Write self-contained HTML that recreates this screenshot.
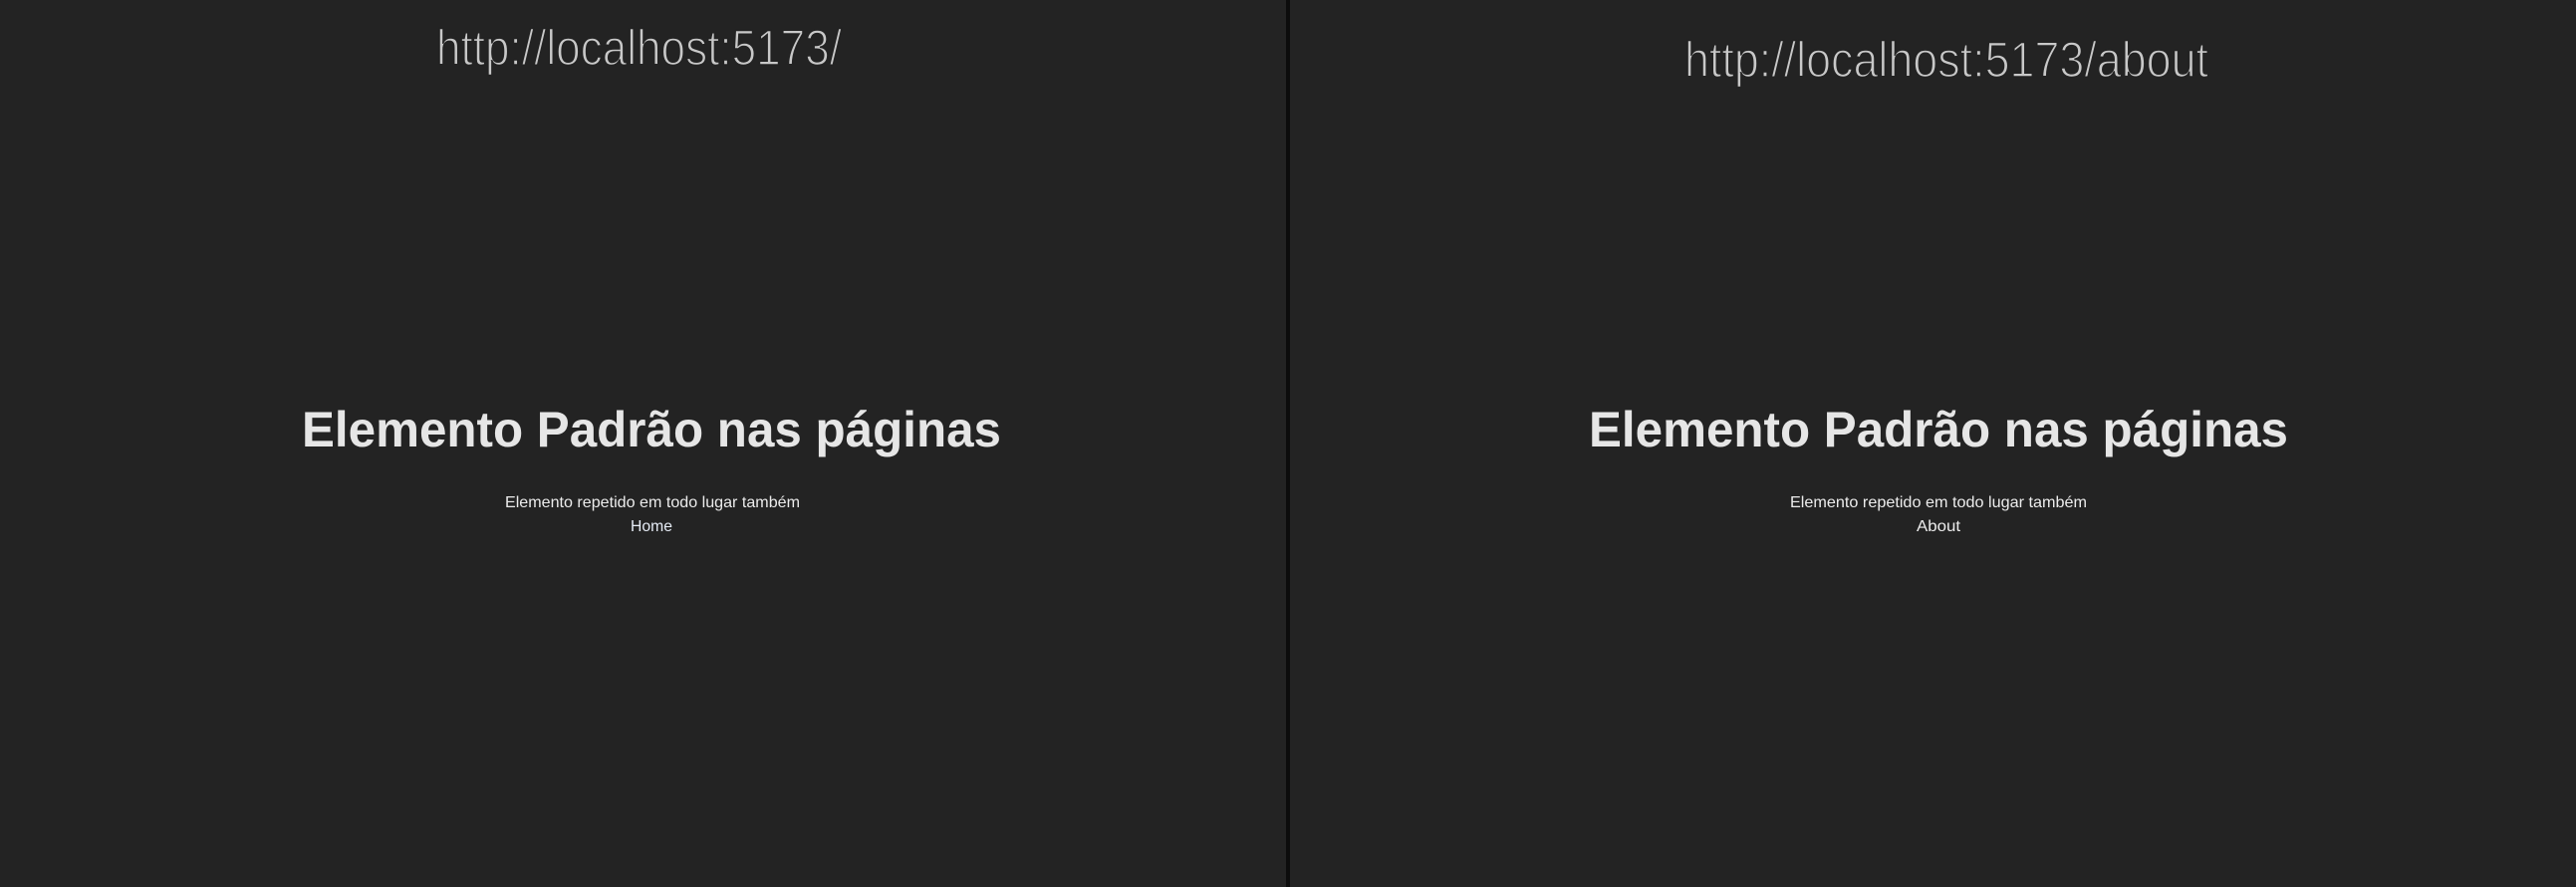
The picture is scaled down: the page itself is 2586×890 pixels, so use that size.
<!DOCTYPE html>
<html><head><meta charset="utf-8"><style>
html,body{margin:0;padding:0;background:#232323;width:2586px;height:890px;overflow:hidden}
svg{display:block}
</style></head><body>
<svg width="2586" height="890" xmlns="http://www.w3.org/2000/svg">
<rect width="2586" height="890" fill="#232323"/>
<rect x="1291" y="0" width="4" height="890" fill="#0c0c0c"/>
<g font-family="Liberation Sans, sans-serif">
<text x="438" y="65" font-size="50" fill="#c8c8c8" stroke="#232323" stroke-width="1.6" textLength="407" lengthAdjust="spacingAndGlyphs">http://localhost:5173/</text>
<text x="1691" y="77" font-size="50" fill="#c8c8c8" stroke="#232323" stroke-width="1.6" textLength="526" lengthAdjust="spacingAndGlyphs">http://localhost:5173/about</text>
<text x="303" y="448" font-size="50" font-weight="bold" fill="#e6e6e6" textLength="702" lengthAdjust="spacingAndGlyphs">Elemento Padrão nas páginas</text>
<text x="1595" y="448" font-size="50" font-weight="bold" fill="#e6e6e6" textLength="702" lengthAdjust="spacingAndGlyphs">Elemento Padrão nas páginas</text>
<text x="507" y="509" font-size="16" fill="#ececec" textLength="296" lengthAdjust="spacingAndGlyphs">Elemento repetido em todo lugar também</text>
<text x="633" y="533" font-size="16" fill="#e6ecf6" textLength="42" lengthAdjust="spacingAndGlyphs">Home</text>
<text x="1797" y="509" font-size="16" fill="#ececec" textLength="298" lengthAdjust="spacingAndGlyphs">Elemento repetido em todo lugar também</text>
<text x="1924" y="533" font-size="16" fill="#ececec" textLength="44" lengthAdjust="spacingAndGlyphs">About</text>
</g>
</svg>
</body></html>
